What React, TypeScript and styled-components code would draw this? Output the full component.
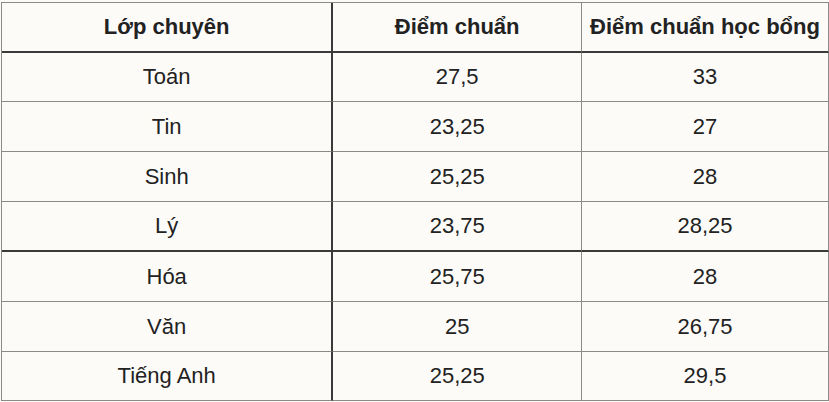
import styled, { createGlobalStyle } from "styled-components";

const Global = createGlobalStyle`
	html, body {
		margin: 0;
		background: #fcfbf8;
	}
	body {
		font-family: "Liberation Sans", Arial, sans-serif;
		color: #222;
	}
`;

const Wrap = styled.div`
	padding: 2px 0 0 1px;
	overflow: hidden;
	width: 829px;
	height: 402px;
	box-sizing: border-box;
`;

const Table = styled.table`
	border-collapse: separate;
	border-spacing: 0;
	border-top: 1px solid #8a8a8a;
	border-left: 1px solid #8a8a8a;
	table-layout: fixed;
	font-size: 22px;
`;

// $w / $h are the inner sizes; the borders are added on top
const Cell = styled.td<{ $first?: boolean; $h: number; $thick?: boolean; $w: number }>`
	box-sizing: border-box;
	width: ${(p) => p.$w + (p.$first ? 2 : 1)}px;
	height: ${(p) => p.$h + (p.$thick ? 2 : 1)}px;
	padding: 0 4px;
	text-align: center;
	vertical-align: middle;
	white-space: nowrap;
	border-right: ${(p) => (p.$first ? "2px solid #3a3a3a" : "1px solid #8a8a8a")};
	border-bottom: ${(p) => (p.$thick ? "2px solid #3a3a3a" : "1px solid #8a8a8a")};
`;

const Head = styled(Cell).attrs({ as: "th" })`
	font-weight: 700;
`;

const widths = [330, 248, 246];

const rows: { cells: string[]; h: number; thick?: boolean }[] = [
	{ cells: ["Toán", "27,5", "33"], h: 48 },
	{ cells: ["Tin", "23,25", "27"], h: 49 },
	{ cells: ["Sinh", "25,25", "28"], h: 49 },
	{ cells: ["Lý", "23,75", "28,25"], h: 48, thick: true },
	{ cells: ["Hóa", "25,75", "28"], h: 49 },
	{ cells: ["Văn", "25", "26,75"], h: 49 },
	{ cells: ["Tiếng Anh", "25,25", "29,5"], h: 48 },
];

const headers = ["Lớp chuyên", "Điểm chuẩn", "Điểm chuẩn học bổng"];

export default function App() {
	return (
		<>
			<Global />
			<Wrap>
				<Table>
					<thead>
						<tr>
							{headers.map((t, i) => (
								<Head key={t} $w={widths[i]} $h={48} $thick $first={i === 0}>
									{t}
								</Head>
							))}
						</tr>
					</thead>
					<tbody>
						{rows.map((r) => (
							<tr key={r.cells[0]}>
								{r.cells.map((c, i) => (
									<Cell key={i} $w={widths[i]} $h={r.h} $thick={r.thick} $first={i === 0}>
										{c}
									</Cell>
								))}
							</tr>
						))}
					</tbody>
				</Table>
			</Wrap>
		</>
	);
}
